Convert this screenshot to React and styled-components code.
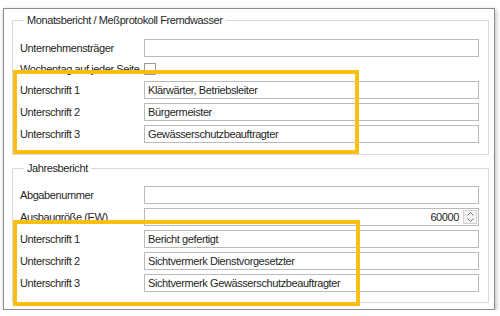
import React from 'react';
import styled, {createGlobalStyle} from 'styled-components';

const GlobalStyle = createGlobalStyle`
body {
    margin: 0;
    background: #ffffff;
    font-family: "Liberation Sans", Arial, sans-serif;
}
`;

const Window = styled.div`
box-sizing: border-box;
width: 492px;
margin: 8px 0 0 3px;
padding: 4px 5px 6px 8px;
border: 1px solid #8c8c8c;
background: #ffffff;
box-shadow: 1px 2px 5px rgba(0, 0, 0, 0.28);
display: flex;
flex-direction: column;
gap: 6px;
`;

const GroupBox = styled.fieldset`
margin: 0;
padding: ${props => props.$pad || '12px 9px 11px 7px'};
border: 1px solid #dadada;
min-width: 0;
`;

const Legend = styled.legend`
padding: 0 3px;
margin-left: 4px;
font-size: 11px;
line-height: 14px;
letter-spacing: -0.4px;
color: #1f1f1f;
`;

const FieldGrid = styled.div`
display: grid;
grid-template-columns: 124px 1fr;
grid-auto-rows: ${props => props.$row || '18px'};
row-gap: 4px;
align-items: center;
position: relative;
margin-top: ${props => props.$top || '0px'};
`;

const Label = styled.div`
font-size: 11px;
letter-spacing: -0.4px;
color: #1f1f1f;
white-space: nowrap;
`;

const TextBox = styled.div`
box-sizing: border-box;
height: 18px;
border: 1px solid #bababa;
background: #ffffff;
padding: 0 3px;
display: flex;
align-items: center;
justify-content: ${props => (props.$right ? 'flex-end' : 'flex-start')};
font-size: 11px;
letter-spacing: -0.4px;
color: #1f1f1f;
white-space: nowrap;
overflow: hidden;
`;

const SpinBox = styled(TextBox)`
padding: 1px 1px 1px 3px;
gap: 4px;
`;

const SpinButtons = styled.div`
box-sizing: border-box;
width: 14px;
height: 100%;
border: 1px solid #d0d0d0;
background: #f6f6f6;
display: flex;
flex-direction: column;
align-items: center;
justify-content: space-around;
`;

const CheckBox = styled.div`
box-sizing: border-box;
width: 12px;
height: 12px;
border: 1px solid #9a9a9a;
background: #ffffff;
`;

const Marker = styled.div`
position: absolute;
top: ${props => props.$top}px;
bottom: ${props => props.$bottom}px;
left: -7px;
width: ${props => props.$width}px;
box-sizing: border-box;
border: 4px solid #fbbf14;
pointer-events: none;
`;

const Chevron = ({up}) => (
    <svg width="7" height="4" viewBox="0 0 7 4">
        <path d={up ? 'M0.5 3.5 L3.5 0.5 L6.5 3.5' : 'M0.5 0.5 L3.5 3.5 L6.5 0.5'}
              fill="none" stroke="#6a6a6a" strokeWidth="1"/>
    </svg>
);

const Field = ({label, value}) => (
    <>
        <Label>{label}</Label>
        <TextBox>{value}</TextBox>
    </>
);

const App = () => {
    return <Window>
        <GlobalStyle/>
        <GroupBox>
            <Legend>Monatsbericht / Meßprotokoll Fremdwasser</Legend>
            <FieldGrid>
                <Field label="Unternehmensträger" value=""/>
            </FieldGrid>
            <FieldGrid $row="16px" $top="4px">
                <Label>Wochentag auf jeder Seite</Label>
                <CheckBox/>
            </FieldGrid>
            <FieldGrid $top="4px">
                <Field label="Unterschrift 1" value="Klärwärter, Betriebsleiter"/>
                <Field label="Unterschrift 2" value="Bürgermeister"/>
                <Field label="Unterschrift 3" value="Gewässerschutzbeauftragter"/>
                <Marker $top={-11} $bottom={-11} $width={346}/>
            </FieldGrid>
        </GroupBox>
        <GroupBox $pad="11px 9px 10px 7px">
            <Legend>Jahresbericht</Legend>
            <FieldGrid>
                <Field label="Abgabenummer" value=""/>
                <Label>Ausbaugröße (EW)</Label>
                <SpinBox $right>
                    60000
                    <SpinButtons>
                        <Chevron up/>
                        <Chevron/>
                    </SpinButtons>
                </SpinBox>
            </FieldGrid>
            <FieldGrid $top="4px">
                <Field label="Unterschrift 1" value="Bericht gefertigt"/>
                <Field label="Unterschrift 2" value="Sichtvermerk Dienstvorgesetzter"/>
                <Field label="Unterschrift 3" value="Sichtvermerk Gewässerschutzbeauftragter"/>
                <Marker $top={-10} $bottom={-14} $width={347}/>
            </FieldGrid>
        </GroupBox>
    </Window>
}

export default App;
